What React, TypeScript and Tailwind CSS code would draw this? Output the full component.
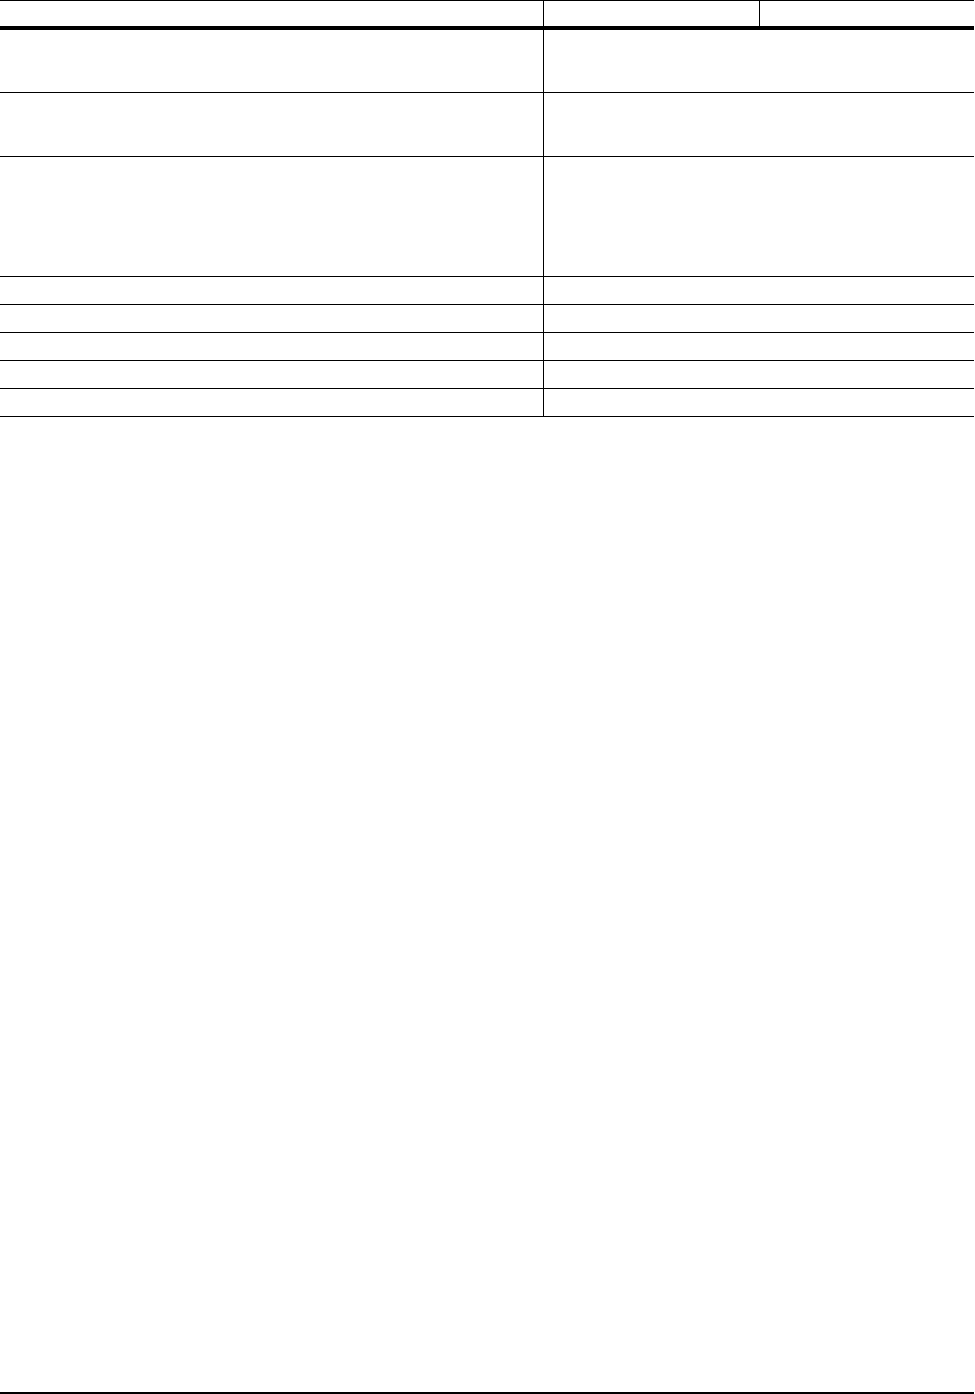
import React from 'react';

const bodyRows = ['h-[63px]', 'h-[64px]', 'h-[120px]', 'h-[28px]', 'h-[28px]', 'h-[28px]', 'h-[28px]', 'h-[28px]'];

const App: React.FC = () => {
  return (
    <div className="flex min-h-screen flex-col bg-white font-['Liberation_Sans',Arial,sans-serif] text-black">
      <div className="w-[974px]">
        {/* header row */}
        <div className="flex h-[30px] border-t border-b-4 border-black">
          <div className="w-[544px] border-r border-black" />
          <div className="w-[216px] border-r border-black" />
          <div className="flex-1" />
        </div>
        {/* body rows */}
        {bodyRows.map((h, i) => (
          <div key={i} className={`flex border-b border-black ${h}`}>
            <div className="w-[544px] border-r border-black" />
            <div className="flex-1" />
          </div>
        ))}
      </div>
      <div className="mt-auto h-[2px] w-[974px] bg-black" />
    </div>
  );
};

export default App;
